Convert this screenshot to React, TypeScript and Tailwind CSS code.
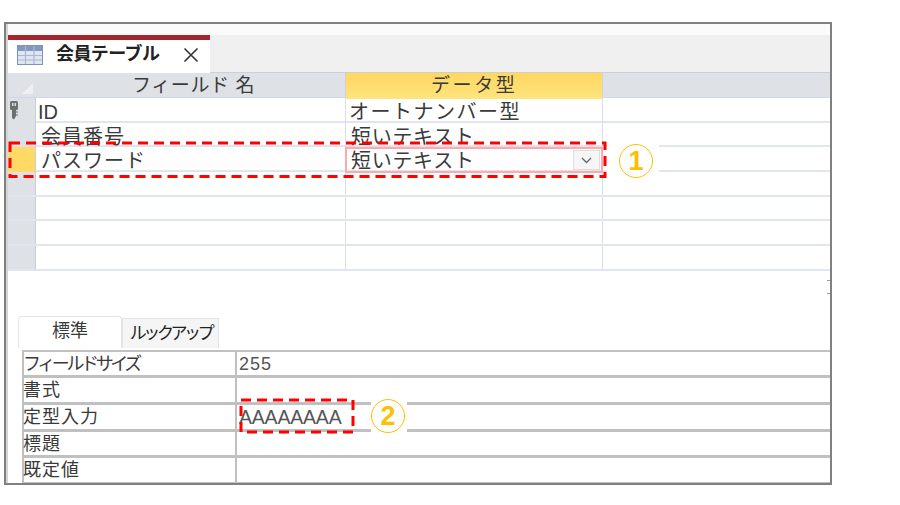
const jp = "font-['Liberation_Sans','Noto_Sans_CJK_JP',sans-serif]";

const rows = [
  { name: "ID", type: "オートナンバー型", key: true },
  { name: "会員番号", type: "短いテキスト" },
  { name: "パスワード", type: "短いテキスト", active: true },
  { name: "", type: "" },
  { name: "", type: "" },
  { name: "", type: "" },
  { name: "", type: "" },
];

const props = [
  { label: "フィールドサイズ", value: "255", tight: true },
  { label: "書式", value: "" },
  { label: "定型入力", value: "AAAAAAAA" },
  { label: "標題", value: "" },
  { label: "既定値", value: "" },
];

function TableIcon() {
  return (
    <svg width="26" height="20" viewBox="0 0 26 20">
      <rect x="0.5" y="0.5" width="25" height="19" fill="#dfe6f2" stroke="#7f93b8" />
      <rect x="1" y="1" width="24" height="5" fill="#8298bf" />
      <path d="M1 10.5H25M1 15H25M8.5 1V19M17 1V19" stroke="#a9b8d2" strokeWidth="1.2" />
    </svg>
  );
}

function KeyIcon() {
  return (
    <svg width="8" height="19" viewBox="0 0 8 19">
      <rect x="0" y="0" width="8" height="9" rx="1.5" fill="#6f6f6f" />
      <rect x="2" y="2" width="1.5" height="3" fill="#d8dbe0" />
      <rect x="4.5" y="2" width="1.5" height="3" fill="#d8dbe0" />
      <path d="M2 9H6V15L4 18.5L2 17Z" fill="#6f6f6f" />
      <path d="M6 11H8M6 14H8" stroke="#6f6f6f" strokeWidth="1.2" />
    </svg>
  );
}

function Badge({ children, className }: { children: string; className: string }) {
  return (
    <div className={`absolute flex h-[34px] items-center bg-white ${className}`}>
      <span className="flex h-[34px] w-[34px] items-center justify-center rounded-full border-[1.5px] border-[#ffc000] text-[27px] font-bold leading-none text-[#ffc000]">
        {children}
      </span>
    </div>
  );
}

export default function App() {
  return (
    <div className={`h-[505px] w-[900px] overflow-hidden bg-white pl-[4px] pt-[22px] ${jp}`}>
      <div className="relative flex h-[463px] w-[828px] flex-col overflow-hidden border-2 border-[#808080] bg-white text-[#3a3a3a] shadow-[inset_2px_0_0_#d4d4d4]">
        <div className="ml-[2px] h-[11px] shrink-0 bg-[#fbfbfb]" />

        <div className="ml-[2px] flex h-[38px] shrink-0 border-b border-[#cfcfcf] bg-[#f0f0f0]">
          <div className="flex h-[38px] w-[202px] flex-col bg-white">
            <div className="h-[5px] bg-[#a4262c]" />
            <div className="flex flex-1 items-center pb-[4px] pl-[9px]">
              <TableIcon />
              <span className="ml-[13px] text-[18px] font-bold tracking-[-0.6px] text-[#222]">会員テーブル</span>
              <svg className="ml-[24px]" width="16" height="16" viewBox="0 0 16 16">
                <path d="M1.5 1.5L14.5 14.5M14.5 1.5L1.5 14.5" stroke="#333" strokeWidth="1.6" />
              </svg>
            </div>
          </div>
        </div>

        <div className="ml-[2px] grid h-[25px] shrink-0 grid-cols-[28px_309px_257px_1fr] border-b border-[#cfd8e6] bg-[#dee1e6] text-[19px] leading-[26px]">
          <div className="flex items-end justify-end pb-[5px] pr-[3px]">
            <svg width="11" height="11" viewBox="0 0 11 11">
              <path d="M11 0V11H0Z" fill="#eef0f3" />
            </svg>
          </div>
          <div className="pl-[96px] tracking-[0.6px]">フィールド 名</div>
          <div className="border-l border-[#cdd3dc] bg-gradient-to-b from-[#ffd75e] to-[#ffe47e] pl-[85px] tracking-[2.6px]">データ型</div>
          <div className="border-l border-[#cdd3dc]" />
        </div>

        <div className="ml-[2px] shrink-0 text-[20px]">
          {rows.map((r, i) => (
            <div key={i} className="grid h-[24.7px] grid-cols-[28px_309px_257px_1fr] border-b-2 border-[#e0e5ef]">
              <div className={`flex items-start border-r border-[#c9ced6] pl-[2px] pt-[3px] ${r.active ? "bg-[#ffd966]" : "bg-[#dee1e6]"}`}>
                {r.key && <KeyIcon />}
              </div>
              <div className={`leading-[29px] ${r.key ? "pl-[2px] tracking-[0px]" : "pl-[5px] tracking-[1px]"}`}>{r.name}</div>
              <div className={`border-l border-[#d9dfea] leading-[29px] ${r.key ? "pl-[3px] tracking-[1.5px]" : "pl-[5px] tracking-[0.7px]"}`}>
                {r.type}
              </div>
              <div className="border-l border-[#d9dfea]" />
            </div>
          ))}
        </div>

        <div className="mt-[43px] flex h-[34px] shrink-0 items-end pl-[12px]">
          <div className="flex h-[32px] w-[104px] justify-center rounded-t-sm border border-b-0 border-[#e4e4e4] bg-white text-[18px] leading-[29px]">標準</div>
          <div className="flex h-[30px] w-[97px] justify-center border border-b-0 border-[#e4e4e4] bg-[#f5f5f5] text-[17px] leading-[29px] tracking-[-3.4px] text-[#222]">ルックアップ</div>
        </div>

        <div className="ml-[16px] mt-[2px] flex-1 border-l-2 border-t-2 border-[#c0c0c0] text-[18px]">
          {props.map((p) => (
            <div key={p.label} className="grid h-[26.6px] grid-cols-[213px_1fr] border-b-[3px] border-[#c0c0c0] leading-[24px]">
              <div className={`-ml-[1px] border-r-2 border-[#c0c0c0] ${p.tight ? "tracking-[-3.4px]" : "tracking-[1px]"}`}>{p.label}</div>
              <div className={`pl-[2px] text-[#555] ${p.value === "255" ? "tracking-[1px]" : "text-[19.5px] tracking-[-0.2px]"}`}>{p.value}</div>
            </div>
          ))}
        </div>

        {/* selected type cell */}
        <div className="absolute left-[339px] top-[123px] flex h-[26px] w-[258px] justify-end border-2 border-[#ffa9ad] p-[1px]">
          <div className="flex h-[20px] w-[27px] items-center justify-center border border-[#dedede] bg-[#f6f6f6]">
            <svg width="11" height="7" viewBox="0 0 11 7">
              <path d="M1 1L5.5 5.5L10 1" fill="none" stroke="#666" strokeWidth="1.3" />
            </svg>
          </div>
        </div>

        <div className="absolute left-[821px] top-[256px] h-[1px] w-[3px] bg-[#b49a78]" />
        <div className="absolute left-[821px] top-[269px] h-[1px] w-[3px] bg-[#b49a78]" />
      </div>

      {/* annotations */}
      <svg className="absolute left-0 top-0" width="900" height="505">
        <rect x="10" y="143" width="595" height="33.5" fill="none" stroke="#ff0000" strokeWidth="3" strokeDasharray="10 6" />
        <rect x="241" y="400" width="112" height="32" fill="none" stroke="#ff0000" strokeWidth="3" strokeDasharray="10 6" />
      </svg>
      <Badge className="left-[607px] top-[144px] w-[52px] pl-[12px]">1</Badge>
      <Badge className="left-[371px] top-[399px] w-[36px]">2</Badge>
    </div>
  );
}
